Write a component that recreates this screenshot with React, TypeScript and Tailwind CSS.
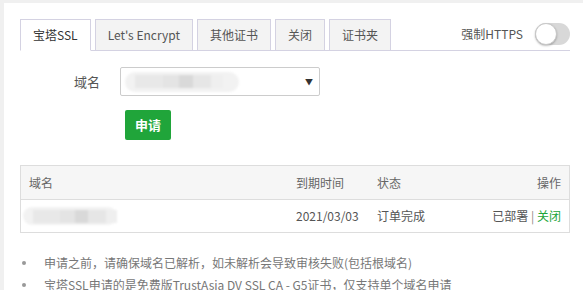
const FONT = { fontFamily: '"Noto Sans CJK SC", "Liberation Sans", sans-serif' }

const TABS = ['宝塔SSL', "Let's Encrypt", '其他证书', '关闭', '证书夹']

function Blur({ className }: { className: string }) {
  return (
    <div className={`flex items-center rounded-full bg-[#f2f2f2] blur-[1px] ${className}`}>
      <div className="ml-[10px] h-[13px] w-[28px] bg-[#e8e8e8]" />
      <div className="h-[13px] w-[16px] bg-[#e4e4e4]" />
      <div className="h-[13px] w-[14px] bg-[#d9d9d9]" />
      <div className="h-[13px] w-[18px] bg-[#e6e6e6]" />
      <div className="h-[13px] w-[12px] bg-[#efefef]" />
    </div>
  )
}

export default function App() {
  return (
    <div className="h-[290px] w-[583px] overflow-hidden bg-[#f0f0f0] pl-[4px] pt-[3px] text-[12px] text-[#555]" style={FONT}>
      <div className="h-full bg-white px-[16px] pt-[16px]">
        {/* tabs */}
        <div className="flex w-[550px] items-end border-b border-[#d4d2e2]">
          <div className="flex gap-[4px]">
            {TABS.map((t, i) => (
              <div
                key={t}
                className={`-mb-px flex h-[32px] items-center px-[12px] ${
                  i === 0
                    ? 'border border-b-white border-[#d4d2e2] bg-white text-[#333]'
                    : 'border border-[#d4d2e2] bg-[#f3f3f3] text-[#555]'
                }`}
              >
                {t}
              </div>
            ))}
          </div>
          <div className="ml-auto flex items-center gap-[12px] self-center pb-[2px]">
            <span className="text-[#555]">强制HTTPS</span>
            <div className="flex h-[22px] w-[35px] items-center rounded-full bg-[#d8d8d8]">
              <div className="h-[22px] w-[22px] rounded-full border border-[#c8c8c8] bg-white shadow-[0_1px_2px_rgba(0,0,0,0.25)]" />
            </div>
          </div>
        </div>

        {/* form */}
        <div className="mt-[16px] flex items-center">
          <label className="w-[100px] pr-[20px] text-right text-[13px] text-[#555]">域名</label>
          <div className="flex h-[29px] w-[200px] items-center rounded-[2px] border border-[#ccc] pl-[4px] pr-[6px]">
            <Blur className="h-[20px] w-[114px]" />
            <span className="ml-auto text-[8px] text-[#333]">▼</span>
          </div>
        </div>
        <div className="mt-[14px] pl-[105px]">
          <button className="h-[30px] w-[46px] rounded-[2px] bg-[#20a53a] text-[13px] font-bold text-white">申请</button>
        </div>

        {/* table */}
        <div className="mt-[25px] w-[550px] border border-[#ddd]">
          <div className="flex h-[34px] items-center border-b border-[#ddd] bg-[#f6f6f6] px-[8px] text-[#666]">
            <div className="w-[267px]">域名</div>
            <div className="w-[81px]">到期时间</div>
            <div>状态</div>
            <div className="ml-auto">操作</div>
          </div>
          <div className="flex h-[32px] items-center px-[8px] text-[#555]">
            <div className="w-[267px]">
              <Blur className="-ml-[6px] h-[18px] w-[94px]" />
            </div>
            <div className="w-[81px]">2021/03/03</div>
            <div>订单完成</div>
            <div className="ml-auto">
              已部署 <span className="text-[#888]">|</span> <span className="text-[#20a53a]">关闭</span>
            </div>
          </div>
        </div>

        {/* notes */}
        <ul className="mt-[21px] space-y-[4px] text-[#777]">
          <li className="flex items-center">
            <span className="ml-[2px] mr-[18px] h-[4px] w-[4px] rounded-full bg-[#999]" />
            <span>申请之前，请确保域名已解析，如未解析会导致审核失败(包括根域名)</span>
          </li>
          <li className="flex items-center">
            <span className="ml-[2px] mr-[18px] h-[4px] w-[4px] rounded-full bg-[#999]" />
            <span>宝塔SSL申请的是免费版TrustAsia DV SSL CA - G5证书，仅支持单个域名申请</span>
          </li>
        </ul>
      </div>
    </div>
  )
}
